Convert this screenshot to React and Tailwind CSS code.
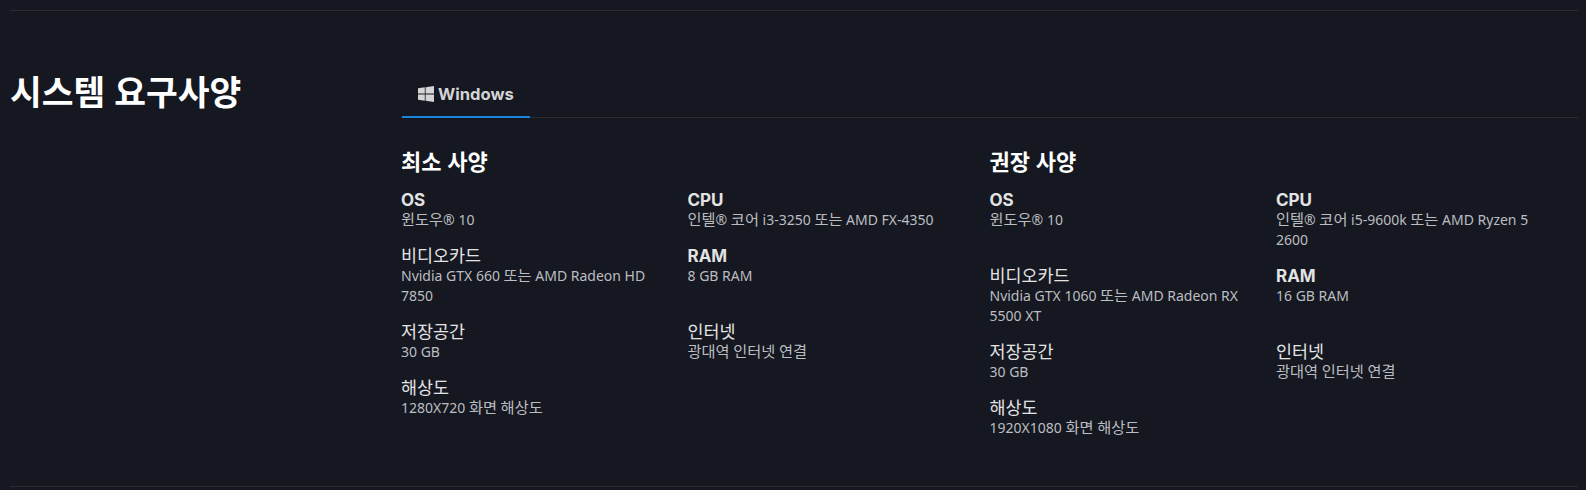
const LATIN = "font-['Noto_Sans','Noto_Sans_CJK_KR',sans-serif]";

const MIN_SPECS = [
  [{ label: 'OS', bold: true, value: '윈도우® 10' }, { label: 'CPU', bold: true, value: '인텔® 코어 i3-3250 또는 AMD FX-4350' }],
  [{ label: '비디오카드', value: 'Nvidia GTX 660 또는 AMD Radeon HD 7850' }, { label: 'RAM', bold: true, value: '8 GB RAM' }],
  [{ label: '저장공간', value: '30 GB' }, { label: '인터넷', value: '광대역 인터넷 연결' }],
  [{ label: '해상도', value: '1280X720 화면 해상도' }],
];

const REC_SPECS = [
  [{ label: 'OS', bold: true, value: '윈도우® 10' }, { label: 'CPU', bold: true, value: '인텔® 코어 i5-9600k 또는 AMD Ryzen 5 2600' }],
  [{ label: '비디오카드', value: 'Nvidia GTX 1060 또는 AMD Radeon RX 5500 XT' }, { label: 'RAM', bold: true, value: '16 GB RAM' }],
  [{ label: '저장공간', value: '30 GB' }, { label: '인터넷', value: '광대역 인터넷 연결' }],
  [{ label: '해상도', value: '1920X1080 화면 해상도' }],
];

function WindowsIcon() {
  return (
    <svg viewBox="0 0 16 16" className="h-4 w-4 text-[#d4d4d6]" fill="currentColor">
      <path d="M0 2.3 6.8 1.3V7.6H0ZM7.6 1.2 16 0V7.6H7.6ZM0 8.4H6.8V14.7L0 13.7ZM7.6 8.4H16V16L7.6 14.8Z" />
    </svg>
  );
}

// hangul runs come out narrower than in the picture, so they get a slightly larger size
function Mixed({ text }) {
  return text.split(/([가-힣]+)/).map((part, i) =>
    /[가-힣]/.test(part) ? <span key={i} className="text-[1.09em] leading-none">{part}</span> : part
  );
}

function Spec({ label, bold, value }) {
  return (
    <div>
      {bold ? (
        <div className="font-['Inter',sans-serif] text-[17px] leading-[20px] font-bold text-[#e3e3e4]">{label}</div>
      ) : (
        <div className="pb-[2px] text-[17.4px] leading-[18px] font-normal text-[#e3e3e4]">{label}</div>
      )}
      <div className="text-sm leading-[20px] text-[#bcbdc0]"><Mixed text={value} /></div>
    </div>
  );
}

function SpecColumn({ title, rows }) {
  return (
    <div>
      <h3 className="mb-[18px] text-[22px] leading-[22px] font-bold text-white">{title}</h3>
      <div className="flex w-[557px] flex-col gap-4">
        {rows.map((row, i) => (
          <div key={i} className="grid grid-cols-2 gap-x-[16px]">
            {row.map((spec) => (
              <Spec key={spec.label} {...spec} />
            ))}
          </div>
        ))}
      </div>
    </div>
  );
}

export default function App() {
  return (
    <div className={`h-[490px] w-full overflow-hidden bg-[#151820] pt-[10px] pr-[8px] pl-[10px] ${LATIN}`}>
      <section className="flex h-[477px] border-y border-[#2c2d31] pt-[61px]">
        <h2 className="w-[392px] shrink-0 text-[34.5px] leading-[40px] font-bold text-white">시스템 요구사양</h2>
        <div className="min-w-0 flex-1">
          <div className="mb-[32px] flex border-b border-[#2c2d31]">
            <div className="-mb-px flex h-[46px] w-[128px] items-center justify-center gap-[4px] border-b-2 border-[#1a84dc] font-['Inter',sans-serif] text-[16.6px] font-bold text-[#d4d4d6]">
              <WindowsIcon />
              <span>Windows</span>
            </div>
          </div>
          <div className="-ml-px grid grid-cols-2">
            <SpecColumn title="최소 사양" rows={MIN_SPECS} />
            <SpecColumn title="권장 사양" rows={REC_SPECS} />
          </div>
        </div>
      </section>
    </div>
  );
}
